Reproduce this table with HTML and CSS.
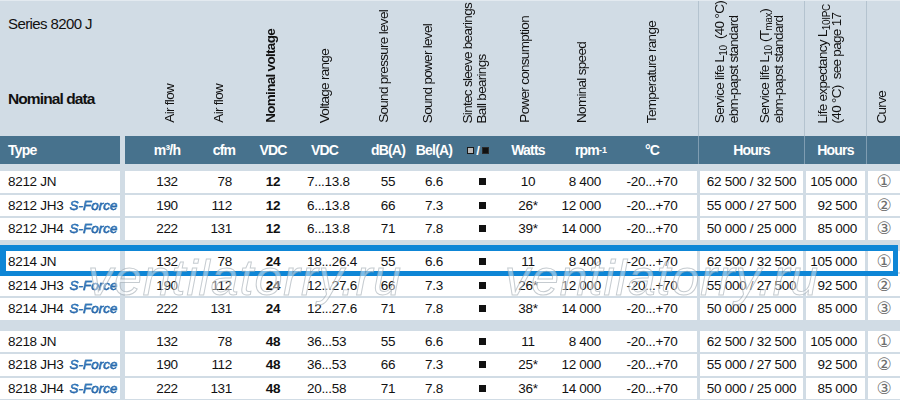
FILE: index.html
```html
<!DOCTYPE html>
<html lang="en">
<head>
<meta charset="utf-8">
<title>Series 8200 J</title>
<link rel="stylesheet" href="styles.css">
</head>
<body>
<div class="table">
  <div class="grid head">
    <div class="cT">
      <div class="series">Series 8200 J</div>
      <div class="nominal">Nominal data</div>
    </div>
    <div class="cA"><span class="v lA">Air flow</span></div>
    <div class="cB"><span class="v lB">Air flow</span></div>
    <div class="cC"><span class="v lC b">Nominal voltage</span></div>
    <div class="cD"><span class="v">Voltage range</span></div>
    <div class="cE"><span class="v lE">Sound pressure level</span></div>
    <div class="cF"><span class="v lF">Sound power level</span></div>
    <div class="cG"><span class="v lG">Sintec sleeve bearings<br>Ball bearings</span></div>
    <div class="cH"><span class="v lH">Power consumption</span></div>
    <div class="cI"><span class="v lI">Nominal speed</span></div>
    <div class="cJ"><span class="v">Temperature range</span></div>
    <div class="cS">
      <div class="pair">
        <span class="v">Service life L<sub>10</sub>&nbsp; (40 °C)<br>ebm-papst standard</span>
        <span class="v">Service life L<sub>10</sub> (T<sub>max</sub>)<br>ebm-papst standard</span>
      </div>
    </div>
    <div class="cL"><span class="v lL">Life expectancy L<sub>10IPC</sub><br>(40 °C)&nbsp; see page 17</span></div>
    <div class="cU"><span class="v lU">Curve</span></div>
  </div>

  <div class="grid band">
    <div class="cT">Type</div>
    <div class="cA">m³/h</div>
    <div class="cB">cfm</div>
    <div class="cC">VDC</div>
    <div class="cD">VDC</div>
    <div class="cE">dB(A)</div>
    <div class="cF">Bel(A)</div>
    <div class="cG"><span class="sq grey"></span><span class="slash">/</span><span class="sq black"></span></div>
    <div class="cH">Watts</div>
    <div class="cI">rpm<sup>-1</sup></div>
    <div class="cJ">°C</div>
    <div class="cS">Hours</div>
    <div class="cL">Hours</div>
    <div class="cU"></div>
  </div>

  <div class="group">
    <div class="grid row">
      <div class="cT">8212 JN</div><div class="cA">132</div><div class="cB">78</div><div class="cC">12</div><div class="cD">7...13.8</div><div class="cE">55</div><div class="cF">6.6</div><div class="cG"><span class="dot"></span></div><div class="cH">10</div><div class="cI">8 400</div><div class="cJ">-20...+70</div><div class="cS">62 500 / 32 500</div><div class="cL">105 000</div><div class="cU">①</div>
    </div>
    <div class="grid row">
      <div class="cT">8212 JH3<span class="sf">S-Force</span></div><div class="cA">190</div><div class="cB">112</div><div class="cC">12</div><div class="cD">6...13.8</div><div class="cE">66</div><div class="cF">7.3</div><div class="cG"><span class="dot"></span></div><div class="cH">26*</div><div class="cI">12 000</div><div class="cJ">-20...+70</div><div class="cS">55 000 / 27 500</div><div class="cL">92 500</div><div class="cU">②</div>
    </div>
    <div class="grid row">
      <div class="cT">8212 JH4<span class="sf">S-Force</span></div><div class="cA">222</div><div class="cB">131</div><div class="cC">12</div><div class="cD">6...13.8</div><div class="cE">71</div><div class="cF">7.8</div><div class="cG"><span class="dot"></span></div><div class="cH">39*</div><div class="cI">14 000</div><div class="cJ">-20...+70</div><div class="cS">50 000 / 25 000</div><div class="cL">85 000</div><div class="cU">③</div>
    </div>
  </div>

  <div class="group">
    <div class="grid row hl">
      <div class="cT">8214 JN</div><div class="cA">132</div><div class="cB">78</div><div class="cC">24</div><div class="cD">18...26.4</div><div class="cE">55</div><div class="cF">6.6</div><div class="cG"><span class="dot"></span></div><div class="cH">11</div><div class="cI">8 400</div><div class="cJ">-20...+70</div><div class="cS">62 500 / 32 500</div><div class="cL">105 000</div><div class="cU">①</div>
    </div>
    <div class="grid row">
      <div class="cT">8214 JH3<span class="sf">S-Force</span></div><div class="cA">190</div><div class="cB">112</div><div class="cC">24</div><div class="cD">12...27.6</div><div class="cE">66</div><div class="cF">7.3</div><div class="cG"><span class="dot"></span></div><div class="cH">26*</div><div class="cI">12 000</div><div class="cJ">-20...+70</div><div class="cS">55 000 / 27 500</div><div class="cL">92 500</div><div class="cU">②</div>
    </div>
    <div class="grid row">
      <div class="cT">8214 JH4<span class="sf">S-Force</span></div><div class="cA">222</div><div class="cB">131</div><div class="cC">24</div><div class="cD">12...27.6</div><div class="cE">71</div><div class="cF">7.8</div><div class="cG"><span class="dot"></span></div><div class="cH">38*</div><div class="cI">14 000</div><div class="cJ">-20...+70</div><div class="cS">50 000 / 25 000</div><div class="cL">85 000</div><div class="cU">③</div>
    </div>
  </div>

  <div class="group">
    <div class="grid row">
      <div class="cT">8218 JN</div><div class="cA">132</div><div class="cB">78</div><div class="cC">48</div><div class="cD">36...53</div><div class="cE">55</div><div class="cF">6.6</div><div class="cG"><span class="dot"></span></div><div class="cH">11</div><div class="cI">8 400</div><div class="cJ">-20...+70</div><div class="cS">62 500 / 32 500</div><div class="cL">105 000</div><div class="cU">①</div>
    </div>
    <div class="grid row">
      <div class="cT">8218 JH3<span class="sf">S-Force</span></div><div class="cA">190</div><div class="cB">112</div><div class="cC">48</div><div class="cD">36...53</div><div class="cE">66</div><div class="cF">7.3</div><div class="cG"><span class="dot"></span></div><div class="cH">25*</div><div class="cI">12 000</div><div class="cJ">-20...+70</div><div class="cS">55 000 / 27 500</div><div class="cL">92 500</div><div class="cU">②</div>
    </div>
    <div class="grid row">
      <div class="cT">8218 JH4<span class="sf">S-Force</span></div><div class="cA">222</div><div class="cB">131</div><div class="cC">48</div><div class="cD">20...58</div><div class="cE">71</div><div class="cF">7.8</div><div class="cG"><span class="dot"></span></div><div class="cH">36*</div><div class="cI">14 000</div><div class="cJ">-20...+70</div><div class="cS">50 000 / 25 000</div><div class="cL">85 000</div><div class="cU">③</div>
    </div>
  </div>

  <div class="watermark wm1">ventilatorry.ru</div>
  <div class="watermark wm2">ventilatorry.ru</div>
</div>
</body>
</html>
```

FILE: styles.css
```css
:root {
  --bg: #d1dce5;
  --band: #47728d;
  --hl: #0e86d6;
  --line: #b4c3cf;
}

html, body {
  margin: 0;
  padding: 0;
}

body {
  width: 900px;
  height: 400px;
  overflow: hidden;
  background: var(--bg);
  font-family: "Liberation Sans", Arial, sans-serif;
  color: #111;
}

.table {
  position: relative;
  border-top: 1px solid #e3eaf0;
}

.grid {
  display: grid;
  grid-template-columns: 125px 84px 30px 68px 53px 51px 46px 42px 58px 68px 75px 106px 62px 32px;
}

.grid > div {
  box-sizing: border-box;
  display: flex;
  align-items: center;
  justify-content: center;
  white-space: nowrap;
  min-width: 0;
}

/* column geometry */
.cT { border-right: 5px solid transparent; }
.cJ, .cS, .cL { border-right: 3px solid transparent; }
.cD { padding-right: 18px; }
.cE { padding-left: 5px; }
.cJ { padding-right: 18px; }

/* header labels */
.head {
  height: 135px;
}

.head > div {
  align-items: flex-end;
  padding-bottom: 13px;
}

.head .cT {
  flex-direction: column;
  align-items: flex-start;
  justify-content: flex-start;
  padding: 13px 0 0 8px;
}

.series {
  font-size: 15px;
  line-height: 19px;
  letter-spacing: -0.6px;
}

.nominal {
  margin-top: 56px;
  font-size: 15.5px;
  line-height: 19px;
  font-weight: bold;
  letter-spacing: -0.9px;
}

.head .cJ, .head .cS, .head .cL {
  background: linear-gradient(var(--line), var(--line)) right 1px top / 1px 100% no-repeat border-box;
}

.v {
  writing-mode: vertical-rl;
  transform: rotate(180deg);
  font-size: 13.5px;
  line-height: 14px;
  letter-spacing: -0.7px;
  white-space: nowrap;
}

.v sub {
  font-size: 10px;
  line-height: 0;
  letter-spacing: -0.3px;
}

.b { font-weight: bold; }

.lA { margin-left: 6px; }
.lB { margin-right: 11px; }
.lC { margin-right: 4px; }
.lE { margin-right: 9px; }
.lF { margin-right: 12px; }
.lG { margin-right: 6px; }
.lH { margin-right: 7px; }
.lI { margin-right: 18px; }
.lL { margin-right: 11px; }
.lU { margin-right: 4px; }

.pair {
  display: flex;
  gap: 17px;
  margin-right: 4px;
}

/* band */
.band {
  height: 28px;
  margin-bottom: 7px;
  color: #fff;
  font-weight: bold;
  font-size: 14px;
  letter-spacing: -0.8px;
}

.band > div {
  background: var(--band) padding-box;
}

.band .cJ, .band .cS, .band .cL {
  background: linear-gradient(#7f9db2, #7f9db2) right 1px top / 1px 100% no-repeat border-box, var(--band) border-box;
}

.band .cT {
  justify-content: flex-start;
  padding-left: 8px;
}

.band sup {
  font-size: 9px;
  line-height: 0;
  letter-spacing: 0;
}

.sq {
  display: inline-block;
  width: 7px;
  height: 7px;
  box-sizing: border-box;
}

.sq.grey {
  background: #b9b9b9;
  border: 1px solid #1a1a1a;
}

.sq.black {
  background: #111;
  border: 1px solid #2a2a2a;
}

.slash {
  margin: 0 2px;
  font-size: 13px;
  letter-spacing: 0;
}

/* data rows */
.group + .group {
  margin-top: 11px;
}

.row {
  height: 21.6px;
  font-size: 13.5px;
  letter-spacing: -0.3px;
}

.row + .row {
  margin-top: 2px;
}

.row > div {
  background: #fff padding-box;
}

.row .cT {
  justify-content: flex-start;
  padding-left: 8px;
}

.row .cB {
  justify-content: flex-end;
  padding-right: 7px;
}

.row .cC {
  font-weight: bold;
}

.row .cD {
  justify-content: flex-start;
  padding-right: 0;
}

.row .cG {
  padding-left: 9px;
}

.row .cI {
  justify-content: flex-end;
  padding-right: 24px;
}

.row .cL {
  justify-content: flex-end;
  padding-right: 8px;
}

.row .cU {
  font-family: "DejaVu Sans", sans-serif;
  font-size: 17px;
  line-height: 1;
  color: #6e6e6e;
  letter-spacing: 0;
}

.dot {
  display: inline-block;
  width: 7px;
  height: 7px;
  background: #111;
}

.sf {
  margin-left: 6px;
  font-style: italic;
  font-size: 13.5px;
  letter-spacing: 0;
  color: #2d7cc2;
  background: linear-gradient(#5aa9e6, #1d5fa6);
  -webkit-background-clip: text;
  background-clip: text;
  -webkit-text-fill-color: transparent;
  -webkit-text-stroke: 0.4px #1b5a9e;
}

/* highlighted row overlay */
.hl {
  position: relative;
}

.hl::after {
  content: "";
  position: absolute;
  top: -6px;
  left: 0;
  right: 2px;
  bottom: -3.5px;
  border: 6px solid var(--hl);
  border-right-width: 5px;
  border-bottom-width: 5.5px;
  pointer-events: none;
}

/* watermark */
.watermark {
  position: absolute;
  top: 252px;
  font-family: "Liberation Sans", Arial, sans-serif;
  font-style: italic;
  font-size: 50px;
  line-height: 50px;
  letter-spacing: 1px;
  color: rgba(255, 255, 255, 0.45);
  -webkit-text-stroke: 1px rgba(150, 160, 170, 0.55);
  white-space: nowrap;
  pointer-events: none;
}

.wm1 { left: 88px; }
.wm2 { left: 505px; }
```
